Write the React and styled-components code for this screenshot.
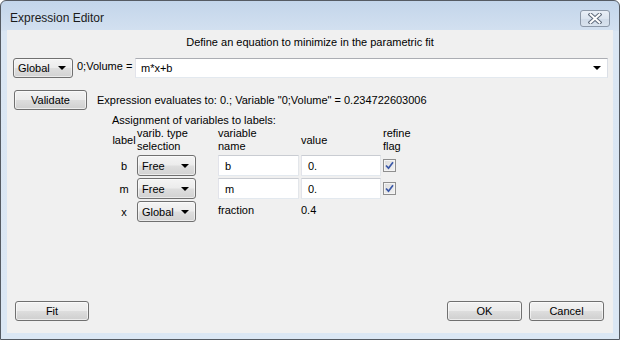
import React from 'react';
import styled, { createGlobalStyle } from 'styled-components';

const GlobalStyle = createGlobalStyle`
  html, body { margin: 0; padding: 0; background: #ffffff; }
  body {
    font-family: "Liberation Sans", Arial, sans-serif;
    font-size: 11px;
    color: #000;
  }
  * { box-sizing: border-box; }
`;

const Window = styled.div`
  width: 620px;
  height: 340px;
  border: 1px solid #555b63;
  border-radius: 6px 6px 0 0;
  background: linear-gradient(to bottom, #c3d5ea 0px, #d2e0f0 29px, #dae6f3 30px, #dbe7f4 100%);
  display: flex;
  flex-direction: column;
  padding: 0 6px 6px 6px;
`;

const TitleBar = styled.div`
  height: 29px;
  display: flex;
  align-items: flex-start;
  justify-content: space-between;
`;

const Title = styled.div`
  font-family: "Liberation Sans", Arial, sans-serif;
  font-size: 12px;
  color: #1b1b1b;
  padding: 10px 0 0 3px;
`;

const CloseButton = styled.div`
  width: 30px;
  height: 17px;
  margin: 9px 3px 0 0;
  border: 1px solid #8c98a8;
  border-radius: 3px;
  background: linear-gradient(to bottom, #e9eff7 0%, #dbe4ef 50%, #cfdae8 51%, #d9e3ee 100%);
  display: flex;
  align-items: center;
  justify-content: center;
`;

const Client = styled.div`
  flex: 1;
  background: #f0f0f0;
  display: flex;
  flex-direction: column;
`;

const Header = styled.div`
  margin-top: 5px;
  height: 14px;
  line-height: 14px;
  text-align: center;
`;

const Row = styled.div`
  display: flex;
  align-items: ${p => p.$align || 'center'};
  margin-top: ${p => p.$top || 0}px;
  padding: 0 ${p => p.$right || 0}px 0 ${p => p.$left || 0}px;
`;

const Combo = styled.div`
  width: ${p => p.$w}px;
  height: ${p => p.$h || 20}px;
  border: 1px solid #707070;
  border-radius: 3px;
  background: linear-gradient(to bottom, #f4f4f4 0%, #ececec 48%, #dedede 52%, #d2d2d2 100%);
  box-shadow: inset 0 0 0 1px rgba(255, 255, 255, 0.55);
  display: flex;
  align-items: center;
  justify-content: space-between;
  padding: 0 6px 0 4px;
  flex-shrink: 0;
`;

const Arrow = styled.span`
  width: 0;
  height: 0;
  border-left: 4px solid transparent;
  border-right: 4px solid transparent;
  border-top: 4px solid #000;
`;

const FieldLabel = styled.div`
  width: ${p => p.$w}px;
  margin-left: ${p => p.$ml || 0}px;
  line-height: 14px;
  align-self: flex-start;
  padding-top: 1px;
  white-space: nowrap;
`;

const EditCombo = styled.div`
  flex: 1;
  height: 20px;
  background: #fff;
  border: 1px solid;
  border-color: #abadb3 #dbdfe6 #e3e9ef #e2e3ea;
  display: flex;
  align-items: center;
  justify-content: space-between;
  padding: 0 6px 0 5px;
`;

const Button = styled.div`
  width: ${p => p.$w}px;
  height: 20px;
  margin-left: ${p => p.$ml || 0}px;
  border: 1px solid #707070;
  border-radius: 3px;
  background: linear-gradient(to bottom, #f2f2f2 0%, #ebebeb 48%, #dddddd 52%, #cfcfcf 100%);
  box-shadow: inset 0 0 0 1px rgba(255, 255, 255, 0.6);
  display: flex;
  align-items: center;
  justify-content: center;
  flex-shrink: 0;
`;

const Message = styled.div`
  margin-left: 10px;
  white-space: nowrap;
`;

const Caption = styled.div`
  margin: 4px 0 0 105px;
  height: 13px;
  line-height: 13px;
`;

const Table = styled.div`
  margin-left: 104px;
  display: grid;
  grid-template-columns: 26px 81px 83px 82px 40px;
  grid-template-rows: 26px 21px 21px 21px;
  row-gap: 2px;
`;

const HeadCell = styled.div`
  line-height: 13px;
  align-self: ${p => (p.$center ? 'center' : 'start')};
  text-align: ${p => (p.$middle ? 'center' : 'left')};
  white-space: nowrap;
`;

const LabelCell = styled.div`
  text-align: center;
  align-self: center;
`;

const TextCell = styled.div`
  align-self: start;
  padding-top: 3px;
  line-height: 13px;
`;

const Input = styled.div`
  width: ${p => p.$w}px;
  height: 21px;
  background: #fff;
  border: 1px solid;
  border-color: #c9ccd2 #e3e6ea #e3e9ef #e2e3ea;
  display: flex;
  align-items: center;
  padding-left: 6px;
`;

const CheckBox = styled.div`
  width: 13px;
  height: 13px;
  align-self: center;
  border: 1px solid #8f8f8f;
  background: linear-gradient(135deg, #dcdcdc 0%, #f2f2f2 100%);
  box-shadow: inset 0 0 0 1px #f4f4f4;
  display: flex;
  align-items: center;
  justify-content: center;
`;

const Spacer = styled.div`
  flex: 1;
`;

const Footer = styled.div`
  display: flex;
  align-items: center;
  padding: 0 9px 12px 8px;
`;

const Check = () => (
  <svg width="9" height="9" viewBox="0 0 9 9">
    <path d="M1 4.5 L3.5 7.2 L8 1.2" fill="none" stroke="#3a58a8" strokeWidth="1.7" />
  </svg>
);

const CloseGlyph = () => (
  <svg width="14" height="11" viewBox="0 0 14 11">
    <path d="M2.5 1.5 L11.5 9.5 M11.5 1.5 L2.5 9.5" stroke="#5f6b7c" strokeWidth="4" strokeLinecap="square" />
    <path d="M2.5 1.5 L11.5 9.5 M11.5 1.5 L2.5 9.5" stroke="#ffffff" strokeWidth="2" strokeLinecap="square" />
  </svg>
);

const rows = [
  { label: 'b', type: 'Free', name: 'b', value: '0.', refine: true },
  { label: 'm', type: 'Free', name: 'm', value: '0.', refine: true },
];

export default function App() {
  return (
    <>
      <GlobalStyle />
      <Window>
        <TitleBar>
          <Title>Expression Editor</Title>
          <CloseButton><CloseGlyph /></CloseButton>
        </TitleBar>
        <Client>
          <Header>Define an equation to minimize in the parametric fit</Header>
          <Row $top={9} $left={6} $right={5}>
            <Combo $w={60}>Global<Arrow /></Combo>
            <FieldLabel $w={58} $ml={4}>0;Volume =</FieldLabel>
            <EditCombo>m*x+b<Arrow /></EditCombo>
          </Row>
          <Row $top={12} $left={0}>
            <Button $w={73} $ml={7}>Validate</Button>
            <Message>Expression evaluates to: 0.; Variable "0;Volume" = 0.234722603006</Message>
          </Row>
          <Caption>Assignment of variables to labels:</Caption>
          <Table>
            <HeadCell $center $middle>label</HeadCell>
            <HeadCell>varib. type<br />selection</HeadCell>
            <HeadCell>variable<br />name</HeadCell>
            <HeadCell $center>value</HeadCell>
            <HeadCell>refine<br />flag</HeadCell>
            {rows.map(r => (
              <React.Fragment key={r.label}>
                <LabelCell>{r.label}</LabelCell>
                <Combo $w={59} $h={21}>{r.type}<Arrow /></Combo>
                <Input $w={81}>{r.name}</Input>
                <Input $w={80}>{r.value}</Input>
                <CheckBox>{r.refine && <Check />}</CheckBox>
              </React.Fragment>
            ))}
            <LabelCell>x</LabelCell>
            <Combo $w={59} $h={21}>Global<Arrow /></Combo>
            <TextCell>fraction</TextCell>
            <TextCell>0.4</TextCell>
            <div />
          </Table>
          <Spacer />
          <Footer>
            <Button $w={74}>Fit</Button>
            <Spacer />
            <Button $w={75}>OK</Button>
            <Button $w={75} $ml={7}>Cancel</Button>
          </Footer>
        </Client>
      </Window>
    </>
  );
}
